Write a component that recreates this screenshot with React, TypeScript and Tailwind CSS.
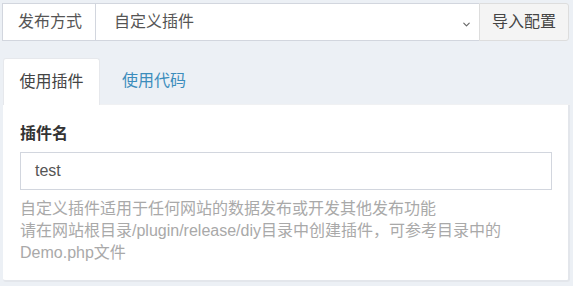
import { ChevronDown } from "lucide-react";

const font = { fontFamily: '"Liberation Sans", "Noto Sans CJK SC", sans-serif' };

export default function App() {
  return (
    <div
      className="min-h-screen bg-[#ecf0f5] pt-[3px] pl-[3px] pr-[3px] text-[16px] text-[#333]"
      style={font}
    >
      {/* 发布方式 */}
      <div className="flex h-[38px] w-[567px] -ml-px">
        <div className="flex items-center border border-[#d2d6de] bg-white pl-[15px] pr-[13px] text-[#555]">
          发布方式
        </div>
        <div className="relative flex flex-1 items-center border-y border-[#d2d6de] bg-white pl-[18px] text-[#555]">
          <span>自定义插件</span>
          <ChevronDown
            className="absolute right-[7px] top-[15px] h-[11px] w-[11px] text-[#666]"
            strokeWidth={2.5}
          />
        </div>
        <button className="flex w-[90px] items-center justify-center rounded-r-[3px] border border-[#ddd] bg-[#f4f4f4] text-[#444]">
          导入配置
        </button>
      </div>

      {/* 选项卡 */}
      <div className="mt-[18px] flex h-[46px] items-end border-b border-[#f0f1f3]">
        <div className="-mb-px flex h-[47px] w-[97px] items-center justify-center rounded-t-[3px] border border-b-0 border-[#e6e8ec] bg-white text-[#444]">
          使用插件
        </div>
        <div className="flex h-[46px] items-center pl-[22px] text-[#3c8dbc]">使用代码</div>
      </div>

      <div className="w-[567px] rounded-b-[3px] border-r-2 border-b-2 border-[#e3e6eb] bg-white pb-[16px] pl-[17px] pr-[16px] pt-[18px]">
        <div className="font-bold leading-[22px] text-[#333]">插件名</div>
        <div className="mt-[7px] flex h-[38px] items-center border border-[#d2d6de] px-[14px] text-[#555]">
          test
        </div>
        <div className="mt-[8px] leading-[22px] text-[#a9a9a9]">
          <div>自定义插件适用于任何网站的数据发布或开发其他发布功能</div>
          <div>请在网站根目录/plugin/release/diy目录中创建插件，可参考目录中的</div>
          <div>Demo.php文件</div>
        </div>
      </div>
    </div>
  );
}
